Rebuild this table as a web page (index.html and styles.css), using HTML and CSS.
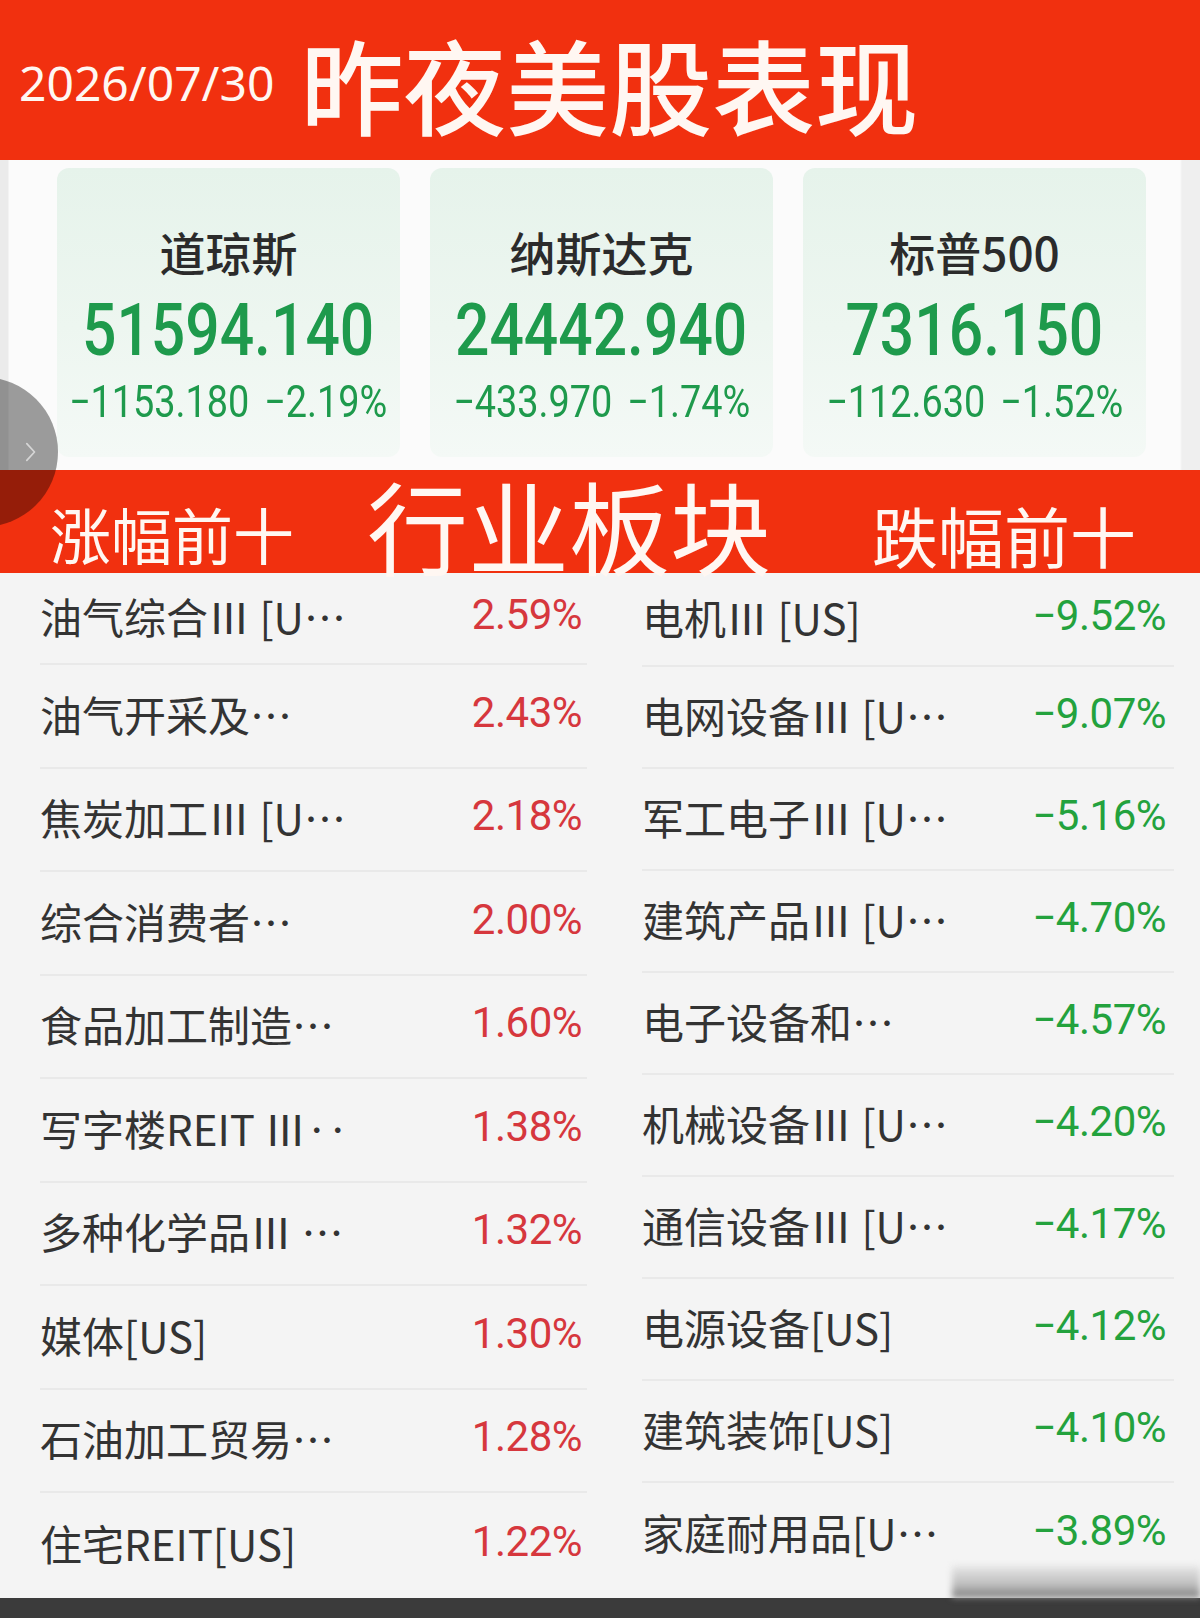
FILE: index.html
```html
<!DOCTYPE html>
<html lang="zh-CN">
<head>
<meta charset="utf-8">
<title>昨夜美股表现</title>
<link rel="stylesheet" href="styles.css">
</head>
<body>
<div class="page">
  <header class="header">
    <span class="date">2026/07/30</span>
    <h1 class="title">昨夜美股表现</h1>
  </header>

  <section class="indices">
    <div class="card">
      <div class="card-name">道琼斯</div>
      <div class="card-value">51594.140</div>
      <div class="card-change"><span>−1153.180</span><span>−2.19%</span></div>
    </div>
    <div class="card">
      <div class="card-name">纳斯达克</div>
      <div class="card-value">24442.940</div>
      <div class="card-change"><span>−433.970</span><span>−1.74%</span></div>
    </div>
    <div class="card">
      <div class="card-name">标普500</div>
      <div class="card-value">7316.150</div>
      <div class="card-change"><span>−112.630</span><span>−1.52%</span></div>
    </div>
  </section>

  <section class="band">
    <span class="band-side band-left">涨幅前十</span>
    <span class="band-main">行业板块</span>
    <span class="band-side band-right">跌幅前十</span>
  </section>

  <section class="lists">
    <ul class="list list-up">
      <li class="row"><span class="name">油气综合Ⅲ [U…</span><span class="pct up">2.59%</span></li>
      <li class="row"><span class="name">油气开采及…</span><span class="pct up">2.43%</span></li>
      <li class="row"><span class="name">焦炭加工Ⅲ [U…</span><span class="pct up">2.18%</span></li>
      <li class="row"><span class="name">综合消费者…</span><span class="pct up">2.00%</span></li>
      <li class="row"><span class="name">食品加工制造…</span><span class="pct up">1.60%</span></li>
      <li class="row"><span class="name">写字楼REIT Ⅲ‥</span><span class="pct up">1.38%</span></li>
      <li class="row"><span class="name">多种化学品Ⅲ …</span><span class="pct up">1.32%</span></li>
      <li class="row"><span class="name">媒体[US]</span><span class="pct up">1.30%</span></li>
      <li class="row"><span class="name">石油加工贸易…</span><span class="pct up">1.28%</span></li>
      <li class="row"><span class="name">住宅REIT[US]</span><span class="pct up">1.22%</span></li>
    </ul>
    <ul class="list list-down">
      <li class="row"><span class="name">电机Ⅲ [US]</span><span class="pct down">−9.52%</span></li>
      <li class="row"><span class="name">电网设备Ⅲ [U…</span><span class="pct down">−9.07%</span></li>
      <li class="row"><span class="name">军工电子Ⅲ [U…</span><span class="pct down">−5.16%</span></li>
      <li class="row"><span class="name">建筑产品Ⅲ [U…</span><span class="pct down">−4.70%</span></li>
      <li class="row"><span class="name">电子设备和…</span><span class="pct down">−4.57%</span></li>
      <li class="row"><span class="name">机械设备Ⅲ [U…</span><span class="pct down">−4.20%</span></li>
      <li class="row"><span class="name">通信设备Ⅲ [U…</span><span class="pct down">−4.17%</span></li>
      <li class="row"><span class="name">电源设备[US]</span><span class="pct down">−4.12%</span></li>
      <li class="row"><span class="name">建筑装饰[US]</span><span class="pct down">−4.10%</span></li>
      <li class="row"><span class="name">家庭耐用品[U…</span><span class="pct down">−3.89%</span></li>
    </ul>
  </section>

  <div class="bottom-bar"></div>

  <div class="float-btn">
    <svg class="chev" viewBox="0 0 20 30" width="14" height="22"><polyline points="4,3 15,15 4,27" fill="none" stroke="#d6d6d6" stroke-width="2.4" stroke-linecap="round" stroke-linejoin="round"/></svg>
  </div>
  <div class="smudge"></div>
</div>
</body>
</html>
```

FILE: styles.css
```css
* { box-sizing: border-box; }
html, body { margin: 0; padding: 0; }
body {
  width: 1200px;
  height: 1618px;
  overflow: hidden;
  background: #f4f4f4;
  font-family: "Noto Sans CJK SC", "Noto Sans", sans-serif;
}
.page {
  position: relative;
  width: 1200px;
  height: 1618px;
  display: flex;
  flex-direction: column;
}

/* header */
.header {
  height: 160px;
  background: #f1300f;
  display: flex;
  align-items: center;
  padding-left: 19px;
  color: #fff7f2;
}
.date {
  font-family: "Noto Sans", sans-serif;
  font-size: 48px;
  line-height: 1;
  margin-top: 6px;
}
.title {
  margin: 0 0 0 26px;
  font-family: "Noto Sans CJK SC", sans-serif;
  font-weight: 500;
  font-size: 103px;
  line-height: 1;
  margin-top: 6px;
}

/* index cards */
.indices {
  height: 310px;
  background: linear-gradient(to right, #ebebeb 0, #ebebeb 8px, #fbfbfb 9px, #fbfbfb 1180px, #efefef 1182px);
  display: grid;
  grid-template-columns: 343px 343px 343px;
  column-gap: 30px;
  padding: 8px 0 13px 57px;
}
.card {
  border-radius: 12px;
  background: linear-gradient(to bottom, #e6f3eb 0%, #edf6f0 55%, #f4f9f6 100%);
  display: flex;
  flex-direction: column;
  align-items: center;
  padding-top: 55px;
}
.card-name {
  font-size: 46px;
  line-height: 56px;
  color: #2b2b2b;
  font-weight: 500;
}
.card-value {
  font-family: "Roboto", sans-serif;
  font-weight: 500;
  font-size: 73px;
  line-height: 80px;
  margin-top: 11px;
  color: #1e9a4c;
  transform: scaleX(0.83);
  white-space: nowrap;
}
.card-change {
  font-family: "Roboto", sans-serif;
  font-size: 44px;
  line-height: 50px;
  margin-top: 7px;
  color: #1e9a4c;
  display: flex;
  gap: 17px;
  white-space: nowrap;
  transform: scaleX(0.86);
}

/* red band */
.band {
  height: 103px;
  background: #f1300f;
  display: flex;
  align-items: center;
  color: #fff7f2;
}
.band-side {
  font-size: 61px;
  line-height: 64px;
  margin-top: 24px;
}
.band-left { margin-left: 50px; }
.band-main {
  font-size: 101px;
  line-height: 84px;
  margin-left: 73px;
  margin-top: 4px;
}
.band-right {
  font-size: 66px;
  line-height: 68px;
  margin-left: 101px;
}

/* lists */
.lists {
  flex: 1;
  display: grid;
  grid-template-columns: 547px 532px;
  column-gap: 55px;
  padding-left: 40px;
}
.list {
  list-style: none;
  margin: 0;
  padding: 0;
}
.row {
  display: flex;
  align-items: center;
  justify-content: space-between;
  border-bottom: 2px solid #e9e9e9;
}
.row:last-child { border-bottom: none; }
.list-up .row { height: 103.5px; padding-right: 5px; }
.list-up .row:first-child { height: 92px; }
.list-down .row { height: 102px; padding-right: 8px; }
.list-down .row:first-child { height: 94px; }
.name {
  font-size: 42px;
  color: #333333;
  line-height: 1;
  margin-top: -4px;
}
.pct {
  font-family: "Roboto", sans-serif;
  font-size: 42px;
  line-height: 1;
  margin-top: -6px;
  letter-spacing: -0.5px;
}
.pct.up { color: #d6373d; }
.pct.down { color: #23a23d; }

.bottom-bar {
  height: 20px;
  background: #3b3b3b;
}

/* overlays */
.float-btn {
  position: absolute;
  left: -92px;
  top: 377px;
  width: 150px;
  height: 150px;
  border-radius: 50%;
  background: rgba(0, 0, 0, 0.38);
}
.chev {
  position: absolute;
  left: 116px;
  top: 64px;
}
.smudge {
  position: absolute;
  left: 952px;
  top: 1566px;
  width: 248px;
  height: 32px;
  background: linear-gradient(to bottom, #e6e6e6 0%, #bdbdbd 60%, #7c7c7c 100%);
  filter: blur(3px);
}
```
